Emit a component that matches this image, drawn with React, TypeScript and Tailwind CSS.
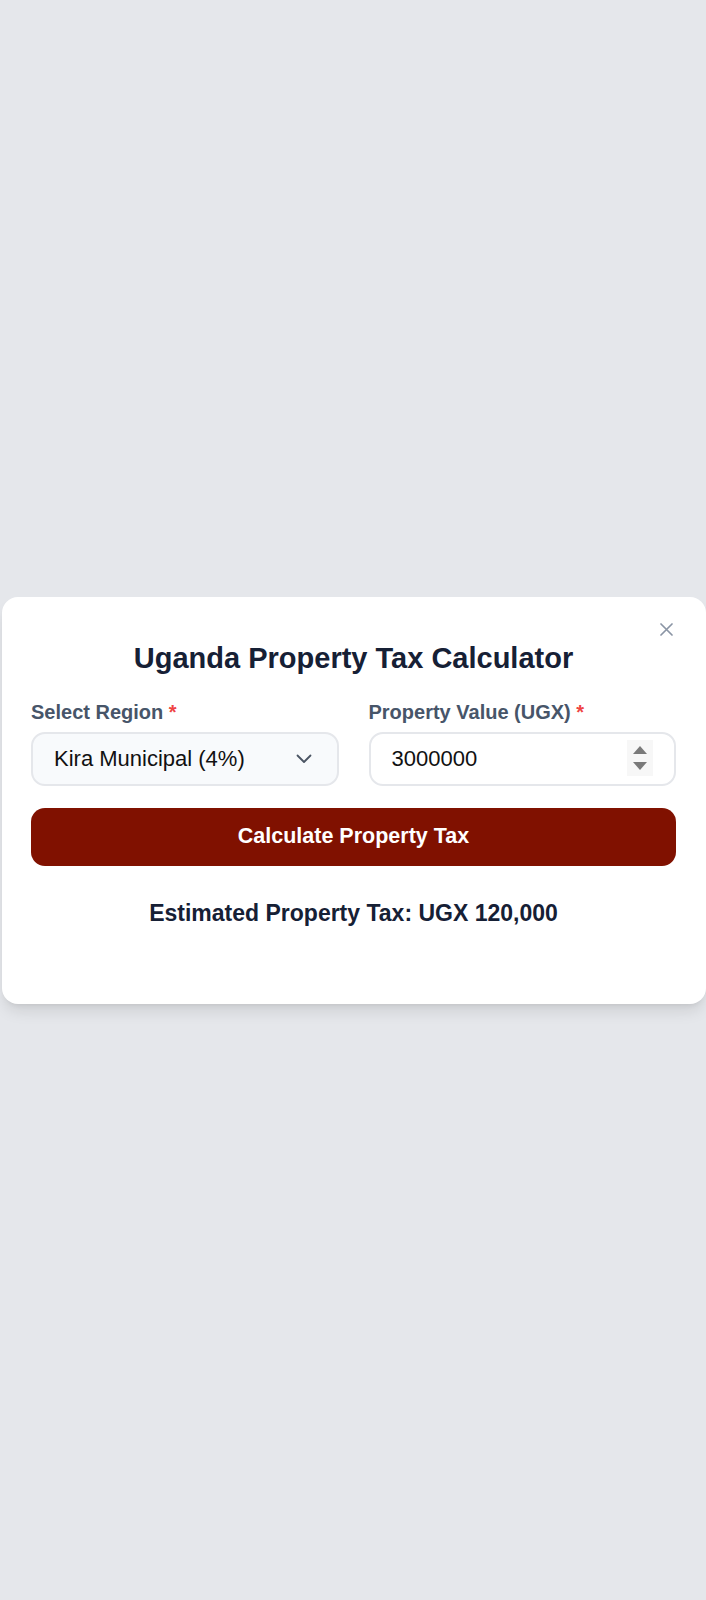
import { useState } from 'react';

const ChevronDown = () => (
  <svg width="16" height="10" viewBox="0 0 16 10" fill="none">
    <path d="M1.5 1.5L8 8l6.5-6.5" stroke="#4b5563" strokeWidth="1.8" strokeLinecap="round" strokeLinejoin="round" />
  </svg>
);

export default function App() {
  const [region, setRegion] = useState('kira');
  const [value, setValue] = useState('3000000');

  return (
    <div
      className="min-h-[1600px] bg-[#e5e7eb] flex items-center pl-[2px]"
      style={{ fontFamily: '"Liberation Sans", Arial, sans-serif' }}
    >
      <div className="relative w-[704px] bg-white rounded-2xl shadow-lg pt-[43px] pb-[75px] pl-[29px] pr-[30px]">
        {/* close */}
        <button className="absolute top-[26px] right-[33px] w-[13px] h-[13px]">
          <svg width="13" height="13" viewBox="0 0 13 13" fill="none">
            <path d="M1 1l11 11M12 1L1 12" stroke="#8b95a5" strokeWidth="1.7" strokeLinecap="round" />
          </svg>
        </button>

        <h2 className="text-center text-[29px] leading-[36px] font-bold text-[#162035]">
          Uganda Property Tax Calculator
        </h2>

        <div className="grid grid-cols-2 gap-[30px] mt-[22px]">
          <div>
            <label className="block text-[20px] leading-[28px] font-bold text-[#475569]">
              Select Region <span className="text-[#ef4444]">*</span>
            </label>
            <div className="relative mt-[6px]">
              <select
                value={region}
                onChange={(e) => setRegion(e.target.value)}
                className="w-full h-[54px] appearance-none rounded-[14px] border-2 border-[#e5e7eb] bg-[#f8fafc] pl-[21px] pr-10 text-[22px] text-[#111] outline-none"
              >
                <option value="kira">Kira Municipal (4%)</option>
                <option value="kampala">Kampala Capital City (6%)</option>
                <option value="entebbe">Entebbe Municipal (5%)</option>
              </select>
              <span className="pointer-events-none absolute left-[265px] top-[22px]">
                <ChevronDown />
              </span>
            </div>
          </div>

          <div>
            <label className="block text-[20px] leading-[28px] font-bold text-[#475569]">
              Property Value (UGX) <span className="text-[#ef4444]">*</span>
            </label>
            <div className="relative mt-[6px]">
              <input
                type="text"
                value={value}
                onChange={(e) => setValue(e.target.value)}
                className="w-full h-[54px] rounded-[14px] border-2 border-[#e5e7eb] bg-white pl-[21px] pr-12 text-[22px] text-[#111] outline-none"
              />
              <div className="pointer-events-none absolute right-[23px] top-[8px] w-[26px] h-[36px] bg-[#f7f7f7] flex flex-col items-center justify-center gap-[8px]">
                <svg width="14" height="8" viewBox="0 0 14 8">
                  <path d="M7 0L14 8H0z" fill="#7a7a7a" />
                </svg>
                <svg width="14" height="8" viewBox="0 0 14 8">
                  <path d="M0 0h14L7 8z" fill="#7a7a7a" />
                </svg>
              </div>
            </div>
          </div>
        </div>

        <button className="w-full h-[58px] mt-[22px] rounded-[14px] bg-[#801100] text-white text-[21.5px] font-bold">
          Calculate Property Tax
        </button>

        <p className="mt-[31px] text-center text-[23px] leading-[32px] font-bold text-[#162035]">
          Estimated Property Tax: UGX 120,000
        </p>
      </div>
    </div>
  );
}
